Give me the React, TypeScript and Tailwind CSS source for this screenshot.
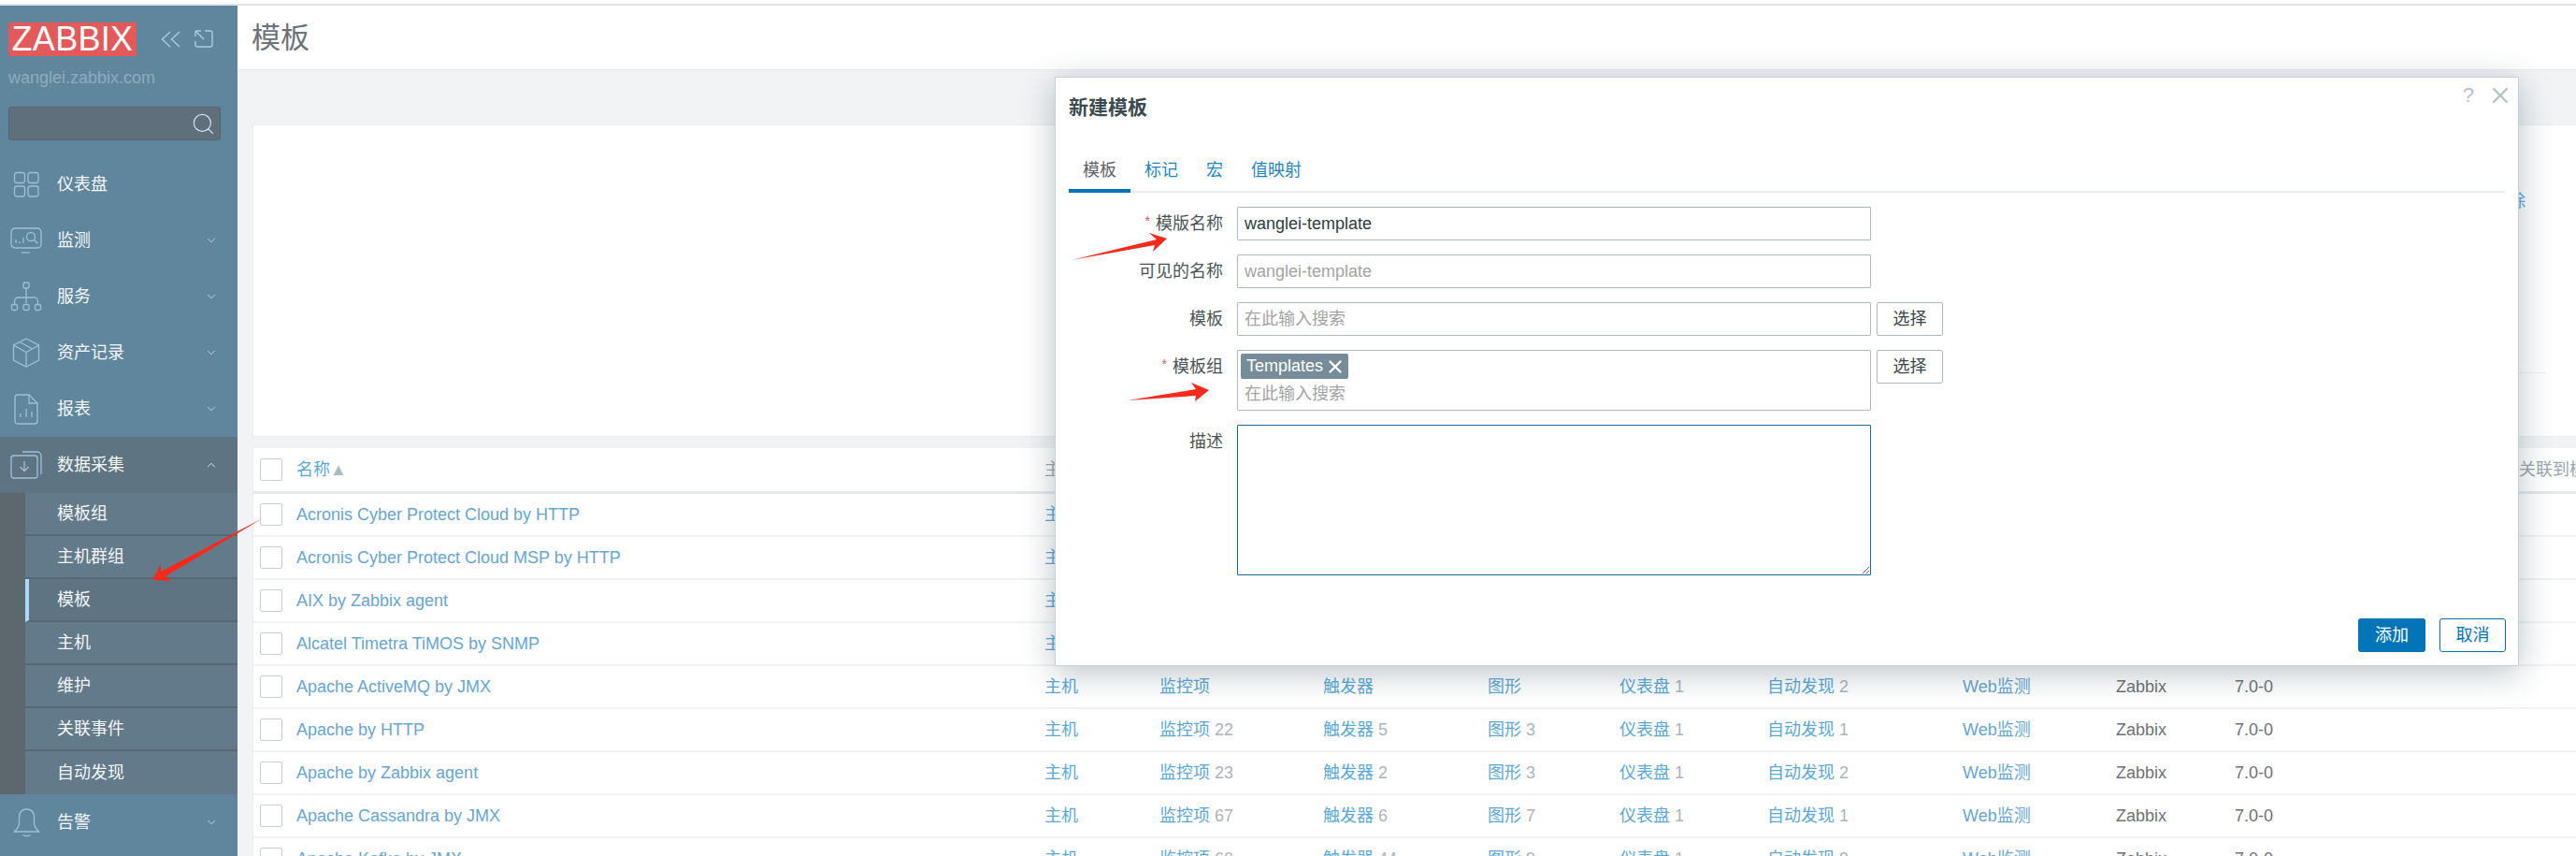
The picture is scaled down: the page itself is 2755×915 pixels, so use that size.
import { ChevronDown, ChevronUp, Search, X } from "lucide-react"

const mainMenu = [
    { label: "仪表盘", icon: <DashboardIcon />, chevron: false },
    { label: "监测", icon: <MonitorIcon />, chevron: true },
    { label: "服务", icon: <ServiceIcon />, chevron: true },
    { label: "资产记录", icon: <BoxIcon />, chevron: true },
    { label: "报表", icon: <ReportIcon />, chevron: true },
]

const subMenu = ["模板组", "主机群组", "模板", "主机", "维护", "关联事件", "自动发现"]

const rows = [
    { name: "Acronis Cyber Protect Cloud by HTTP", items: "", triggers: "", graphs: "", dash: "", disc: "" },
    { name: "Acronis Cyber Protect Cloud MSP by HTTP", items: "", triggers: "", graphs: "", dash: "", disc: "" },
    { name: "AIX by Zabbix agent", items: "", triggers: "", graphs: "", dash: "", disc: "" },
    { name: "Alcatel Timetra TiMOS by SNMP", items: "", triggers: "", graphs: "", dash: "", disc: "" },
    { name: "Apache ActiveMQ by JMX", items: "", triggers: "", graphs: "", dash: "1", disc: "2" },
    { name: "Apache by HTTP", items: "22", triggers: "5", graphs: "3", dash: "1", disc: "1" },
    { name: "Apache by Zabbix agent", items: "23", triggers: "2", graphs: "3", dash: "1", disc: "2" },
    { name: "Apache Cassandra by JMX", items: "67", triggers: "6", graphs: "7", dash: "1", disc: "1" },
    { name: "Apache Kafka by JMX", items: "60", triggers: "44", graphs: "9", dash: "1", disc: "9" },
]

const gridCols = "grid grid-cols-[46px_800px_123px_175px_176px_141px_158px_209px_164px_127px_304px_1fr] items-center"

function DashboardIcon() {
    return (
        <svg width="28" height="28" viewBox="0 0 28 28" fill="none" stroke="currentColor" strokeWidth="1.3">
            <rect x="1.5" y="1.5" width="11" height="11" rx="2.5" />
            <rect x="16" y="1.5" width="11" height="11" rx="2.5" />
            <rect x="1.5" y="16" width="11" height="11" rx="2.5" />
            <rect x="16" y="16" width="11" height="11" rx="2.5" />
        </svg>
    )
}

function MonitorIcon() {
    return (
        <svg width="34" height="28" viewBox="0 0 34 28" fill="none" stroke="currentColor" strokeWidth="1.3">
            <rect x="1" y="1" width="32" height="21" rx="4" />
            <path d="M12 27h9" />
            <path d="M6 17v-4M10 17v-2M14 17v-6" />
            <circle cx="22" cy="10" r="4.500" />
            <path d="M25.500 13.500l4 4" />
        </svg>
    )
}

function ServiceIcon() {
    return (
        <svg width="34" height="32" viewBox="0 0 34 32" fill="none" stroke="currentColor" strokeWidth="1.3">
            <rect x="14" y="1" width="6" height="6" rx="1.500" />
            <path d="M17 7v16M4.500 24v-3a4 4 0 0 1 4-4h17a4 4 0 0 1 4 4v3" />
            <rect x="1.500" y="24.500" width="6" height="6" rx="1.500" />
            <rect x="14" y="24.500" width="6" height="6" rx="1.500" />
            <rect x="26.500" y="24.500" width="6" height="6" rx="1.500" />
        </svg>
    )
}

function BoxIcon() {
    return (
        <svg width="30" height="32" viewBox="0 0 30 32" fill="none" stroke="currentColor" strokeWidth="1.3">
            <path d="M15 1l13.500 7v16L15 31 1.500 24V8z" />
            <path d="M1.500 8L15 15.500 28.500 8M15 15.500V31M8 4.500l13.500 7.500" />
        </svg>
    )
}

function ReportIcon() {
    return (
        <svg width="26" height="33" viewBox="0 0 26 33" fill="none" stroke="currentColor" strokeWidth="1.3">
            <path d="M4 1h12l9 9v19a3 3 0 0 1-3 3H4a3 3 0 0 1-3-3V4a3 3 0 0 1 3-3z" />
            <path d="M16 1v9h9" />
            <path d="M7 25v-4M13 25v-9M19 25v-6" />
        </svg>
    )
}

function DataIcon() {
    return (
        <svg width="34" height="30" viewBox="0 0 34 30" fill="none" stroke="currentColor" strokeWidth="1.3">
            <rect x="1" y="5" width="28" height="24" rx="2.500" />
            <path d="M13 1h16a4 4 0 0 1 4 4v20" />
            <path d="M15 11v10M10.500 17l4.500 4.500 4.500-4.500" />
        </svg>
    )
}

function BellIcon() {
    return (
        <svg width="29" height="31" viewBox="0 0 29 31" fill="none" stroke="currentColor" strokeWidth="1.3">
            <path d="M14.500 1C9 1 6.500 5 6.500 10v6c0 4-2.500 6-5 9h26c-2.500-3-5-5-5-9v-6c0-5-2.500-9-8-9z" />
            <path d="M10.500 28.500c2 1.500 6 1.500 8 0" />
        </svg>
    )
}

function CollapseIcon() {
    return (
        <svg width="21" height="18" viewBox="0 0 21 18" fill="none" stroke="currentColor" strokeWidth="1.4">
            <path d="M10 1L1.500 9 10 17M20 1l-8.500 8 8.500 8" />
        </svg>
    )
}

function ExpandIcon() {
    return (
        <svg width="20" height="20" viewBox="0 0 20 20" fill="none" stroke="currentColor" strokeWidth="1.4">
            <path d="M1 7V3a2 2 0 0 1 2-2h4" />
            <path d="M1 1l9 9" />
            <path d="M11 1h6a2 2 0 0 1 2 2v13a2 2 0 0 1-2 2H3a2 2 0 0 1-2-2v-4" />
        </svg>
    )
}

function Count({ text, n }: { text: string; n: string }) {
    return (
        <div className="whitespace-nowrap">
            <span className="text-[#5aa8dc]">{text}</span>
            {n && <span className="text-[#a9b4bd]"> {n}</span>}
        </div>
    )
}

function Sidebar() {
    return (
        <div className="w-[254px] shrink-0 bg-[#60869e] flex flex-col text-[18px] text-[#f2f6f8] overflow-hidden">
            <div className="px-[9px] pt-[18px]">
                <div className="flex items-center">
                    <div className="w-[137px] h-[36px] bg-[#e45959] text-white text-[36px] leading-[36px] text-center tracking-[0.3px]">ZABBIX</div>
                    <div className="text-[#a8cce0] ml-[26px]"><CollapseIcon /></div>
                    <div className="text-[#a8cce0] ml-[15px]"><ExpandIcon /></div>
                </div>
                <div className="mt-[12px] h-[22px] leading-[22px] text-[#8fabbd]">wanglei.zabbix.com</div>
                <div className="mt-[20px] h-[36px] w-[227px] rounded-[3px] bg-[#5f707c] border border-[#546470] flex items-center justify-end pr-[4px]">
                    <Search size={27} strokeWidth={1.1} className="text-[#cfe0ea]" />
                </div>
            </div>
            <div className="mt-[17px]">
                {mainMenu.map((m) => (
                    <div key={m.label} className="h-[60px] flex items-center">
                        <div className="w-[34px] ml-[11px] flex justify-center text-[#9dc0d6]">{m.icon}</div>
                        <span className="ml-[16px]">{m.label}</span>
                        {m.chevron && <ChevronDown size={14} strokeWidth={1.4} className="ml-auto mr-[21px] text-[#d5e2ea]" />}
                    </div>
                ))}
                <div className="h-[60px] flex items-center bg-[#5f7482]">
                    <div className="w-[34px] ml-[11px] flex justify-center text-[#9dc0d6]"><DataIcon /></div>
                    <span className="ml-[16px]">数据采集</span>
                    <ChevronUp size={14} strokeWidth={1.4} className="ml-auto mr-[21px] text-[#f2f6f8]" />
                </div>
                <div className="bg-[#5d676e] pl-[27px]">
                    {subMenu.map((s) => (
                        <div
                            key={s}
                            className={
                                s === "模板"
                                    ? "h-[46px] flex items-center pl-[30px] bg-[#5f7483] border-l-[4px] border-l-[#a9d9fb] border-b-2 border-b-[#566875]"
                                    : "h-[46px] flex items-center pl-[34px] bg-[#637a8a] border-b-2 border-b-[#566875] last:border-b-0"
                            }
                        >
                            {s}
                        </div>
                    ))}
                </div>
                <div className="h-[60px] flex items-center">
                    <div className="w-[34px] ml-[11px] flex justify-center text-[#9dc0d6]"><BellIcon /></div>
                    <span className="ml-[16px]">告警</span>
                    <ChevronDown size={14} strokeWidth={1.4} className="ml-auto mr-[21px] text-[#d5e2ea]" />
                </div>
            </div>
        </div>
    )
}

function TemplateTable() {
    return (
        <div className="mt-[12px] ml-[16px] bg-white border-l border-[#ebeef0]">
            <div className={`${gridCols} h-[46px] text-[#9aa7ae]`}>
                <div className="w-[24px] h-[24px] ml-[7px] rounded-[2px] border border-[#c4ced4]"></div>
                <div className="text-[#5aa8dc]">名称<span className="text-[#acbbc2]">▲</span></div>
                <div>主机</div>
                <div>监控项</div>
                <div>触发器</div>
                <div>图形</div>
                <div>仪表盘</div>
                <div>自动发现</div>
                <div>Web监测</div>
                <div>供应商</div>
                <div>版本</div>
                <div className="whitespace-nowrap">关联到模板</div>
            </div>
            <div className="h-[3px] bg-[#e6e9ec]"></div>
            {rows.map((r) => (
                <div key={r.name} className={`${gridCols} h-[46px] border-b-2 border-[#f1f3f4]`}>
                    <div className="w-[24px] h-[24px] ml-[7px] rounded-[2px] border border-[#c4ced4]"></div>
                    <div className="text-[#66a6d6]">{r.name}</div>
                    <div className="text-[#5aa8dc]">主机</div>
                    <Count text="监控项" n={r.items} />
                    <Count text="触发器" n={r.triggers} />
                    <Count text="图形" n={r.graphs} />
                    <Count text="仪表盘" n={r.dash} />
                    <Count text="自动发现" n={r.disc} />
                    <div className="text-[#66a6d6]">Web监测</div>
                    <div className="text-[#6d7276]">Zabbix</div>
                    <div className="text-[#6d7276]">7.0-0</div>
                </div>
            ))}
        </div>
    )
}

function Field({ label, required, children }: { label: string; required?: boolean; children: React.ReactNode }) {
    return (
        <div className="flex items-start">
            <div className="w-[165px] h-[36px] flex items-center justify-end text-[#4b5358]">
                {required && <span className="text-[#e45959] text-[14px] mr-[6px] -mt-[6px]">*</span>}
                {label}
            </div>
            <div className="ml-[15px] flex items-start">{children}</div>
        </div>
    )
}

const inputCls = "block w-[678px] h-[36px] px-[7px] border border-[#acbbc2] rounded-[1px] outline-none text-[18px] placeholder:text-[#a3a3a3]"
const selectCls = "ml-[6px] w-[71px] h-[36px] border border-[#acbbc2] rounded-[2px] bg-white text-[#3d464b] text-[18px]"

function TemplateModal() {
    return (
        <div className="absolute left-[1128px] top-[82px] w-[1566px] h-[630px] bg-white border border-[#c5d0d6] shadow-[0_7px_34px_rgba(43,66,82,0.32)] flex flex-col px-[14px] pb-[14px] text-[18px]">
            <div className="absolute right-[5px] top-[5px] flex items-center gap-[14px] text-[#b4c1c8]">
                <span className="text-[22px] leading-[28px]">?</span>
                <X size={28} strokeWidth={2} />
            </div>
            <div className="mt-[17px] text-[21px] leading-[30px] font-bold text-[#3c4a52]">新建模板</div>
            <div className="mt-[38px] flex border-b-2 border-[#ebeef0] h-[38px] text-[#1f86c4]">
                <div className="px-[15px] h-[38px] leading-[28px] border-b-[4px] border-[#0275b8] text-[#5b6368]">模板</div>
                <div className="px-[15px] leading-[28px]">标记</div>
                <div className="px-[15px] leading-[28px]">宏</div>
                <div className="px-[15px] leading-[28px]">值映射</div>
            </div>
            <div className="mt-[15px] flex flex-col gap-[15px]">
                <Field label="模版名称" required>
                    <input className={`${inputCls} text-[#2f3b42]`} defaultValue="wanglei-template" />
                </Field>
                <Field label="可见的名称">
                    <input className={inputCls} placeholder="wanglei-template" />
                </Field>
                <Field label="模板">
                    <input className={inputCls} placeholder="在此输入搜索" />
                    <button className={selectCls}>选择</button>
                </Field>
                <Field label="模板组" required>
                    <div className="w-[678px] h-[65px] border border-[#acbbc2] rounded-[1px] pl-[3px] pt-[3px]">
                        <div className="w-[115px] h-[27px] rounded-[2px] bg-[#768d99] text-white text-[18px] flex items-center pl-[6px] gap-[2px]">
                            Templates
                            <X size={22} strokeWidth={2.6} />
                        </div>
                        <div className="pl-[4px] mt-[3px] text-[#a3a3a3] leading-[26px]">在此输入搜索</div>
                    </div>
                    <button className={selectCls}>选择</button>
                </Field>
                <Field label="描述">
                    <textarea className="block w-[678px] h-[161px] border border-[#1b6a9c] rounded-[1px] outline-none"></textarea>
                </Field>
            </div>
            <div className="mt-auto -mr-px flex justify-end gap-[15px]">
                <button className="w-[72px] h-[36px] rounded-[3px] bg-[#0275b8] text-white">添加</button>
                <button className="w-[71px] h-[36px] rounded-[3px] border border-[#0275b8] bg-white text-[#0275b8]">取消</button>
            </div>
        </div>
    )
}

function Arrows() {
    return (
        <svg className="absolute left-0 top-0 pointer-events-none" width="2755" height="915" fill="#f9291b">
            <polygon points="281,554 172,611 172,603 163,620 183,621 177,616" />
            <polygon points="1146,278 1237,256 1229,249 1248,255 1233,269 1235,262" />
            <polygon points="1206,428 1279,416 1274,409 1293,417 1278,429 1279,423" />
        </svg>
    )
}

export default function App() {
    return (
        <div className="relative w-[2755px] h-[915px] overflow-hidden bg-white font-['Liberation_Sans','Noto_Sans_CJK_SC',sans-serif] text-[18px]">
            <div className="h-[6px] border-b-2 border-[#e2e2e2]"></div>
            <div className="flex h-[909px]">
                <Sidebar />
                <div className="flex-1 min-w-0 bg-[#f2f3f5] overflow-hidden">
                    <div className="h-[69px] bg-white border-b border-[#e8eaec] pl-[15px] pt-[2px] flex items-center">
                        <h1 className="text-[31px] text-[#6c7378]">模板</h1>
                    </div>
                    <div className="mt-[58px] ml-[16px] h-[334px] bg-white border border-[#ebeef0] border-r-0 flex flex-col items-end">
                        <div className="mt-[70px] mr-[54px] text-[#5aa8dc] leading-[22px]">移除</div>
                        <div className="mt-[172px] mr-[32px] w-[400px] h-px bg-[#ebeef0]"></div>
                    </div>
                    <TemplateTable />
                </div>
            </div>
            <TemplateModal />
            <Arrows />
        </div>
    )
}
